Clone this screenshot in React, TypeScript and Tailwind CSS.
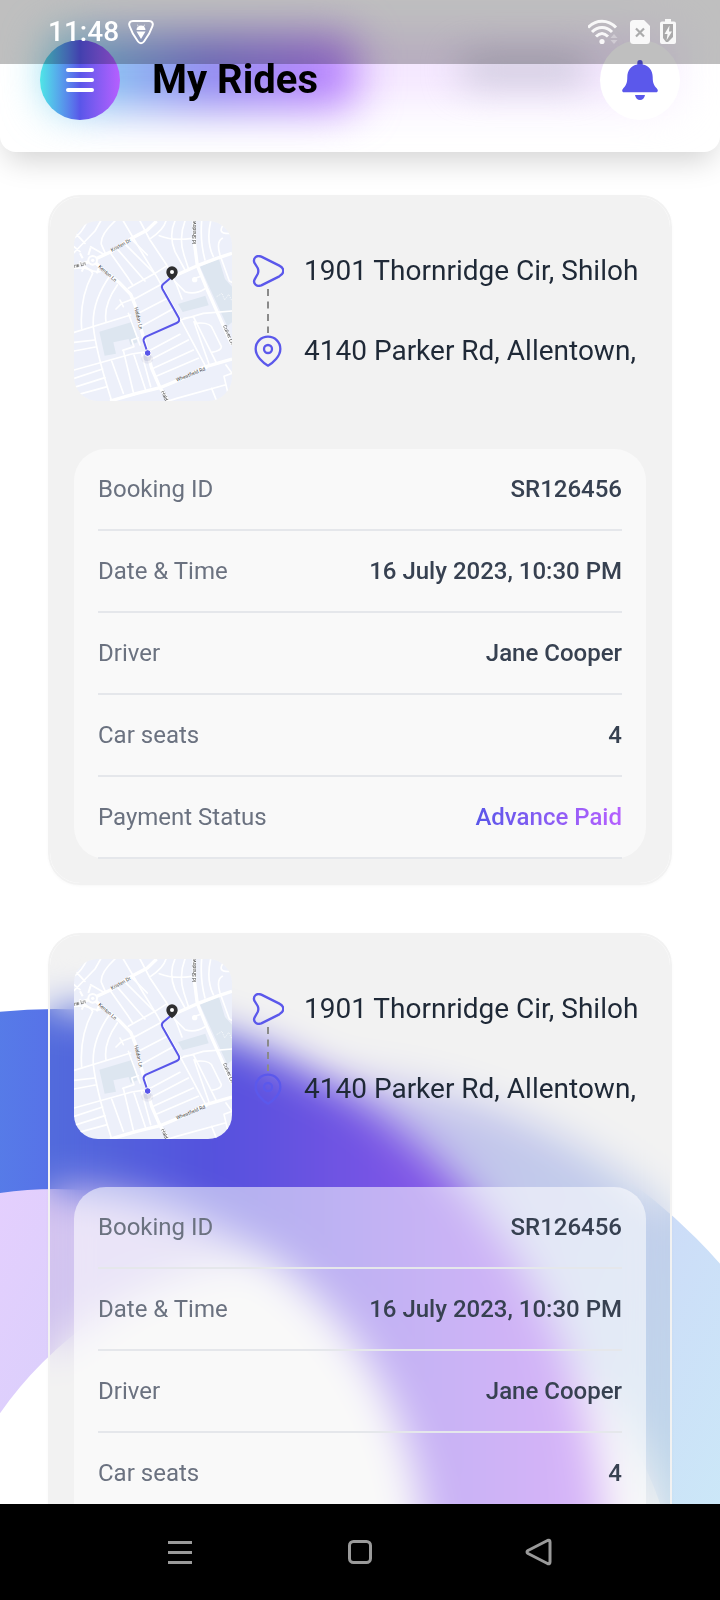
import type { ReactNode } from "react";

type Ride = {
  id: number;
  from: string;
  to: string;
  details: { label: string; value: string; highlight?: boolean }[];
};

const details = [
  { label: "Booking ID", value: "SR126456" },
  { label: "Date & Time", value: "16 July 2023, 10:30 PM" },
  { label: "Driver", value: "Jane Cooper" },
  { label: "Car seats", value: "4" },
  { label: "Payment Status", value: "Advance Paid", highlight: true },
];

const rides: Ride[] = [
  { id: 1, from: "1901 Thornridge Cir, Shiloh", to: "4140 Parker Rd, Allentown,", details },
  { id: 2, from: "1901 Thornridge Cir, Shiloh", to: "4140 Parker Rd, Allentown,", details },
];

function BackgroundRings() {
  return (
    <svg
      className="pointer-events-none absolute inset-0 h-full w-full"
      viewBox="0 0 720 1600"
      preserveAspectRatio="xMidYMid slice"
      aria-hidden="true"
    >
      <defs>
        <linearGradient id="ring-strong" gradientUnits="userSpaceOnUse" x1="-580" y1="0" x2="620" y2="0">
          <stop offset="0" stopColor="#4fe0e4" />
          <stop offset="0.66" stopColor="#5956e9" />
          <stop offset="1" stopColor="#b65fff" />
        </linearGradient>
        <linearGradient id="ring-soft" gradientUnits="userSpaceOnUse" x1="-70" y1="1140" x2="910" y2="1670">
          <stop offset="0" stopColor="#b65fff" />
          <stop offset="0.42" stopColor="#5960e9" />
          <stop offset="1" stopColor="#4fe0e4" />
        </linearGradient>
      </defs>
      <circle cx="307" cy="1627" r="462" fill="none" stroke="url(#ring-soft)" strokeWidth="176" opacity="0.3" />
      <circle cx="55" cy="1559" r="460" fill="none" stroke="url(#ring-strong)" strokeWidth="180" />
    </svg>
  );
}

function StatusBar() {
  return (
    <div className="absolute inset-x-0 top-0 z-10 flex h-16 items-center justify-between bg-black/25 pr-11 pl-12 text-white">
      <div className="flex items-center gap-2">
        <span className="text-[28px] leading-8 font-medium">11:48</span>
        <svg className="h-7 w-7" viewBox="0 0 28 28" fill="none" aria-hidden="true">
          <path
            d="M6 3H22C25 3 26.500 5 25.500 8C23.500 14 20.500 19 17 23.500C15.200 25.800 12.800 25.800 11 23.500C7.500 19 4.500 14 2.500 8C1.500 5 3 3 6 3Z"
            stroke="currentColor"
            strokeWidth="2"
          />
          <path d="M9.500 12H18.500A4.500 4.500 0 0 0 9.500 12ZM9.500 13.500H18.500L14 21ZM10 6L12 8.500L11 9ZM18 6L16 8.500L17 9Z" fill="currentColor" />
        </svg>
      </div>
      <div className="flex items-center gap-2.5 opacity-90">
        <svg className="h-7 w-8" viewBox="1 0 32 28" fill="none" aria-hidden="true">
          <path d="M1 9.500C9 1 21 1 29 9.500" stroke="currentColor" strokeWidth="3" />
          <path d="M5 14C11 8 19 8 25 14" stroke="currentColor" strokeWidth="3" />
          <path d="M9 18.500C13 14.500 17 14.500 21 18.500" stroke="currentColor" strokeWidth="3" />
          <circle cx="15" cy="23.500" r="2.600" fill="currentColor" />
          <path d="M27 16L30.500 20H23.500ZM27 26L30.500 22H23.500Z" fill="currentColor" opacity="0.35" />
        </svg>
        <svg className="h-7 w-5" viewBox="0 0 20 28" fill="none" aria-hidden="true">
          <path d="M4 2H14L20 8V22.500Q20 26 16.500 26H3.500Q0 26 0 22.500V5.500Q0 2 4 2Z" fill="currentColor" />
          <path d="M6 10.500L14 18.500M14 10.500L6 18.500" stroke="#aaaaaa" strokeWidth="2.200" />
        </svg>
        <svg className="h-7 w-4" viewBox="0 0 16 28" aria-hidden="true">
          <path d="M5 1H11V3.500H14Q16 3.500 16 5.500V24Q16 26 14 26H2Q0 26 0 24V5.500Q0 3.500 2 3.500H5Z" fill="currentColor" />
          <path d="M3 6H13V19L8 24H6L3 20Z" fill="#a8a8a8" />
          <path d="M9.500 7.500L4.500 16H7.500L6.500 22.500L12 13.500H9Z" fill="#ffffff" />
        </svg>
      </div>
    </div>
  );
}

function Header() {
  return (
    <header className="relative z-20 h-[152px] shrink-0 rounded-b-2xl bg-white shadow-[0_14px_30px_-6px_rgba(0,0,0,0.18)]">
      <div className="absolute inset-0 overflow-hidden rounded-b-2xl" aria-hidden="true">
        <div className="absolute top-9 right-12 left-20 h-16 bg-[#f3e4ff] blur-[24px]" />
        <div className="absolute top-9 left-[48px] h-[72px] w-[308px] rounded-2xl bg-linear-to-r from-[#7ddff0] via-[#8a88ef] to-[#bb7dff] blur-[22px]" />
        <div className="absolute top-14 left-[460px] h-7 w-32 rounded-full bg-[#c9c6d8] blur-[18px]" />
      </div>
      <StatusBar />
      <div className="relative flex items-center gap-8 px-10 pt-10">
        <button
          type="button"
          aria-label="Open menu"
          className="flex h-20 w-20 flex-col items-center justify-center gap-4 rounded-full bg-linear-to-r from-[#4fe6e6] via-[#5956e9] to-[#b65fff]"
        >
          <svg className="h-6 w-7" viewBox="0 0 28 24" aria-hidden="true">
            <path d="M2 2H26M2 12H26M2 22H26" stroke="#ffffff" strokeWidth="4" strokeLinecap="round" />
          </svg>
        </button>
        <h1 className="flex-1 text-[40px] leading-[48px] font-bold text-black">My Rides</h1>
        <button
          type="button"
          aria-label="Notifications"
          className="flex h-20 w-20 items-center justify-center rounded-full bg-white"
        >
          <svg className="h-10 w-9" viewBox="0 0 36 40" fill="#5b58eb" aria-hidden="true">
            <path d="M18 0C20 0 20.700 1.300 20.700 3V4.500C27 5.500 30.700 10.500 30.700 17C30.700 23 32 25.500 34.700 28.200C36.500 30 36 32.300 34 32.300H2C0 32.300 -0.500 30 1.300 28.200C4 25.500 5.300 23 5.300 17C5.300 10.500 9 5.500 15.300 4.500V3C15.300 1.300 16 0 18 0Z" />
            <path d="M13 35H23C22.500 38 20.500 40 18 40C15.500 40 13.500 38 13 35Z" />
          </svg>
        </button>
      </div>
    </header>
  );
}

function RouteMap() {
  return (
    <svg
      className="h-[180px] w-[158px] shrink-0 rounded-3xl bg-[#edf0fa]"
      viewBox="42 48 474 540"
      role="img"
      aria-label="Route map"
      fill="none"
    >
      <g fill="#dde6f0">
        <path d="M118 380L218 350L232 412L212 420L206 402L160 412L168 446L134 452Z" />
        <path d="M354 297L436 272L446 301L368 321Z" />
        <path d="M420 185L476 160L495 222L516 245V352L502 364L470 295Z" />
      </g>
      <g stroke="#ffffff" strokeWidth="5" strokeLinejoin="round" strokeLinecap="round">
        <path d="M42 100Q65 85 82 48M42 143L105 78L122 48M42 80L75 115M165 48Q120 90 124 118L136 145M92 125L135 150M60 140L42 125" />
        <path d="M190 48L250 150L290 215L360 340L440 490M240 48L270 105L320 180L350 240L366 282" />
        <path d="M150 142L205 220L218 240M170 130L255 228M190 112L285 207M212 100L262 150" />
        <path d="M205 250L285 205L318 184M218 285L300 240M235 325L322 280M242 365L338 312M262 440L360 388M270 465L385 405M280 490L400 435M285 515L415 460" />
        <path d="M272 100Q310 75 318 48M298 92Q340 108 395 100M345 48Q325 90 345 140L375 195M375 48Q355 100 372 150L385 190" />
        <path d="M425 48Q420 110 435 165M452 48Q438 110 460 155M487 100Q468 110 480 150L508 228L516 232M500 48Q460 90 516 85" />
        <path d="M345 230L375 260Q405 270 434 252M400 222L422 214" />
        <path d="M42 190Q90 185 98 205Q58 280 65 370M60 170Q90 205 120 200M150 212Q95 290 100 365Q108 440 155 588M172 240Q130 300 138 350" />
        <path d="M168 312L185 295L225 280M180 285L190 305M42 382L212 330M42 412L104 405M42 438L106 426M42 495L215 447L262 440M42 520L128 492M42 547L135 518M42 572L142 545" />
        <path d="M155 468L190 565M190 436L222 570M188 436L222 425L215 405L235 398M222 450L258 558M245 446L272 545M205 325L240 420" />
        <path d="M362 345L430 325L516 318M372 340L400 335L470 475M405 355Q452 350 458 372L484 425Q485 436 455 442M402 350L448 480" />
        <path d="M325 588L350 580L495 540M455 550L470 588M516 505L492 514L504 565M498 480L516 505" />
      </g>
      <g stroke="#ffffff" strokeWidth="10" strokeLinejoin="round">
        <path d="M42 185L98 166L150 142L215 100L262 75L290 48" />
        <path d="M98 166L125 190L180 235L212 268L225 300L240 360L262 440L275 490L300 548L325 588" />
        <path d="M150 588L230 565L300 548L380 515L430 487L516 462" />
        <path d="M402 48L404 120L412 182L440 250L480 340L516 420" />
        <path d="M338 215L412 182L470 160L516 145" />
      </g>
      <g stroke="#ffffff" strokeWidth="6">
        <circle cx="98" cy="166" r="13" fill="#edf0fa" />
        <path d="M75 180L65 200M118 185L110 205M85 150L92 128M68 160L60 145" />
      </g>
      <circle cx="98" cy="166" r="5" fill="#ffffff" />
      <circle cx="404" cy="224" r="8" fill="#ffffff" />
      <path d="M470 275L486 265L494 285L506 268L516 288" stroke="#ffffff" strokeWidth="2" strokeDasharray="4 3" />
      <g fill="#3f3f3f" fontSize="15">
        <text transform="translate(156 141) rotate(-29)">Kristen Dr</text>
        <text transform="translate(114 187) rotate(41)">Kenton Ln</text>
        <text transform="translate(43 189) rotate(-14)">ne Ln</text>
        <text transform="translate(223 308) rotate(77)">Haldon Ln</text>
        <text transform="translate(351 530) rotate(-22)">Wheatfield Rd</text>
        <text transform="translate(489 362) rotate(67)">Culver Ln</text>
        <text transform="translate(407 117) rotate(-90)">ld Shadow</text>
        <text transform="translate(303 560) rotate(66)">Hald</text>
      </g>
      <ellipse cx="262" cy="462" rx="18" ry="14" fill="#8b8fae" opacity="0.12" />
      <ellipse cx="262" cy="458" rx="11" ry="10" fill="#8b8fae" opacity="0.2" />
      <path
        d="M336 215L310 237Q303 243 307 251L356 338Q361 349 350 354L258 395Q249 400 251 408L263 444"
        stroke="#5956e9"
        strokeWidth="6"
      />
      <circle cx="263" cy="444" r="10" fill="#5956e9" stroke="#ffffff" strokeWidth="3" />
      <path
        d="M336 184A17 17 0 0 1 353 201C353 211 345 218 336 226C327 218 319 211 319 201A17 17 0 0 1 336 184Z"
        fill="#2e2e30"
      />
      <circle cx="336" cy="201" r="6" fill="#ffffff" />
    </svg>
  );
}

function RouteIcons() {
  return (
    <div className="flex w-8 shrink-0 flex-col items-center" aria-hidden="true">
      <svg className="h-8 w-8" viewBox="36 72 96 96" fill="none" stroke="#5b58eb" strokeWidth="7" strokeLinejoin="round">
        <path d="M64 77L118 104C134 112 134 127 118 136L64 163C49 169 38 156 44 145L53 129Q57 120 53 111L43 95C38 80 51 71 64 77Z" />
      </svg>
      <svg className="h-12 w-0.5" viewBox="0 0 2 48">
        <path d="M1 2V46" stroke="#8a8a8a" strokeWidth="2" strokeDasharray="7 5.500" />
      </svg>
      <svg className="h-8 w-8" viewBox="37 316 96 96" fill="none" stroke="#5b58eb" strokeWidth="7" strokeLinejoin="round">
        <path d="M85 408C70 400 48 380 48 358C48 336 65 321 85 321C105 321 122 336 122 358C122 380 100 400 85 408Z" />
        <circle cx="85" cy="358" r="12" />
      </svg>
    </div>
  );
}

function DetailRow({ label, children }: { label: string; children: ReactNode }) {
  return (
    <div className="flex h-[82px] items-center justify-between border-b-2 border-[#e5e7eb] text-2xl">
      <dt className="text-[#6b7280]">{label}</dt>
      <dd className="font-medium text-[#374151]">{children}</dd>
    </div>
  );
}

function RideCard({ ride }: { ride: Ride }) {
  return (
    <article className="rounded-[32px] border-2 border-[#f2f2f2] bg-black/[0.051] bg-clip-padding p-6 shadow-[0_1px_3px_rgba(0,0,0,0.03)] backdrop-blur-[20px]">
      <div className="flex items-center gap-5">
        <RouteMap />
        <RouteIcons />
        <div className="flex min-w-0 flex-1 flex-col gap-12 text-[28px] leading-8 text-[#1f2937]">
          <p className="truncate">{ride.from}</p>
          <p className="truncate">{ride.to}</p>
        </div>
      </div>
      <dl className="mt-12 rounded-[32px] bg-white/55 px-6">
        {ride.details.map((item) => (
          <DetailRow key={item.label} label={item.label}>
            {item.highlight ? (
              <span className="bg-linear-to-r from-[#5956e9] to-[#b65fff] bg-clip-text text-transparent">
                {item.value}
              </span>
            ) : (
              item.value
            )}
          </DetailRow>
        ))}
      </dl>
    </article>
  );
}

function NavigationBar() {
  return (
    <nav
      aria-label="System navigation"
      className="fixed inset-x-0 bottom-0 z-20 grid h-24 grid-cols-3 items-center bg-black px-[90px] text-[#9a9a9a]"
    >
      <button type="button" aria-label="Recent apps" className="flex justify-center">
        <svg className="h-8 w-8" viewBox="0 0 32 32" stroke="currentColor" strokeWidth="3">
          <path d="M4 6.500H28M4 16.500H28M4 26.500H28" />
        </svg>
      </button>
      <button type="button" aria-label="Home" className="flex justify-center">
        <svg className="h-8 w-8" viewBox="0 0 32 32" fill="none" stroke="currentColor" strokeWidth="3">
          <rect x="5.500" y="5.500" width="21" height="21" rx="4" />
        </svg>
      </button>
      <button type="button" aria-label="Back" className="flex justify-center">
        <svg className="h-8 w-8" viewBox="3 0 32 32" fill="none" stroke="currentColor" strokeWidth="3" strokeLinejoin="round">
          <path d="M26.500 4.500Q29 3.500 29 6V26Q29 28.500 26.500 27.500L7 17.500Q5 16 7 14.500Z" />
        </svg>
      </button>
    </nav>
  );
}

export default function App() {
  return (
    <div className="relative flex h-screen flex-col overflow-hidden bg-white font-[Roboto,sans-serif]">
      <BackgroundRings />
      <Header />
      <main className="relative min-h-0 flex-1 overflow-y-auto [scrollbar-width:none]">
        <div className="flex flex-col gap-12 px-12 pt-[43px] pb-36">
          {rides.map((ride) => (
            <RideCard key={ride.id} ride={ride} />
          ))}
        </div>
      </main>
      <NavigationBar />
    </div>
  );
}
